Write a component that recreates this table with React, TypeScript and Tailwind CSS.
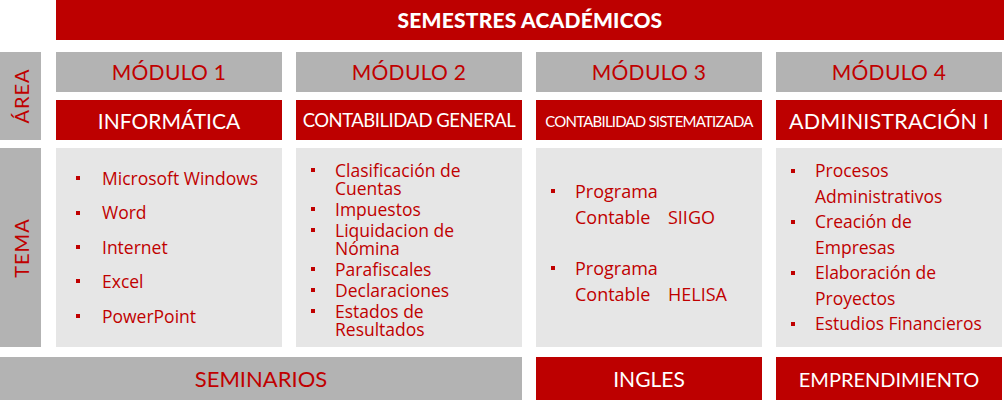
import React from "react";

const head = { fontFamily: "Lato, 'Open Sans', sans-serif" };
const body = { fontFamily: "'Open Sans', 'Noto Sans', sans-serif" };

function Bullet() {
  return <span className="inline-block w-[4px] h-[4px] bg-[#c00000] shrink-0" />;
}

function Lines({ lines }: { lines: string[] }) {
  return (
    <span>
      {lines.map((l, i) => (
        <React.Fragment key={l}>
          {i > 0 && <br />}
          {l}
        </React.Fragment>
      ))}
    </span>
  );
}

export default function App() {
  const cols = "grid grid-cols-[42px_226px_226px_226px_226px] gap-x-[14px]";
  return (
    <div className="w-[1004px] h-[400px] bg-white overflow-hidden">
      <div className="pl-[56px]">
        <div className="h-[40px] bg-[#bd0000] flex items-center justify-center text-white font-black text-[21px] tracking-[0.2px]" style={head}>
          SEMESTRES ACADÉMICOS
        </div>
      </div>
      <div className={`${cols} grid-rows-[40px_40px] gap-y-[8px] mt-[12px]`}>
        <div className="row-span-2 w-[41px] bg-[#b3b3b3] flex items-center justify-center">
          <span className="-rotate-90 text-[#c00000] text-[20px] tracking-[1px] whitespace-nowrap" style={head}>ÁREA</span>
        </div>
        {["MÓDULO 1", "MÓDULO 2", "MÓDULO 3", "MÓDULO 4"].map((m) => (
          <div key={m} className="bg-[#b3b3b3] flex items-center justify-center text-[#c00000] text-[21px] tracking-[0.3px]" style={head}>
            {m}
          </div>
        ))}
        <div className="col-start-2 bg-[#bd0000] flex items-center justify-center text-white text-[21px] pt-[2px]" style={head}>INFORMÁTICA</div>
        <div className="bg-[#bd0000] flex items-center justify-center text-white text-[18.5px] tracking-[-0.5px] pt-[2px]" style={head}>CONTABILIDAD GENERAL</div>
        <div className="bg-[#bd0000] flex items-center justify-center text-white text-[15px] tracking-[-0.8px] pt-[2px]" style={head}>CONTABILIDAD SISTEMATIZADA</div>
        <div className="bg-[#bd0000] flex items-center justify-center text-white text-[21.5px] tracking-[0.2px] pt-[2px]" style={head}>ADMINISTRACIÓN I</div>
      </div>
      <div className={`${cols} mt-[8px] h-[199px]`}>
        <div className="w-[41px] bg-[#b3b3b3] flex items-center justify-center">
          <span className="-rotate-90 text-[#c00000] text-[20px] tracking-[1px] whitespace-nowrap" style={head}>TEMA</span>
        </div>
        <div className="bg-[#e6e6e6] pt-[13px] pl-[20px] text-[#c00000] text-[17.5px]" style={body}>
          {["Microsoft Windows", "Word", "Internet", "Excel", "PowerPoint"].map((t) => (
            <div key={t} className="flex items-center h-[34.4px]">
              <span className="w-[26px] flex"><Bullet /></span>
              <span>{t}</span>
            </div>
          ))}
        </div>
        <div className="bg-[#e6e6e6] pt-[13px] pl-[15px] text-[#c00000] text-[17.5px] leading-[18px] flex flex-col gap-[3px]" style={body}>
          {[["Clasificación de", "Cuentas"], ["Impuestos"], ["Liquidacion de", "Nómina"], ["Parafiscales"], ["Declaraciones"], ["Estados de", "Resultados"]].map((t) => (
            <div key={t[0]} className="flex">
              <span className="w-[24px] h-[18px] flex items-center"><Bullet /></span>
              <Lines lines={t} />
            </div>
          ))}
        </div>
        <div className="bg-[#e6e6e6] pt-[30px] pl-[15px] text-[#c00000] text-[18px] leading-[26px] flex flex-col gap-[25px]" style={body}>
          {["SIIGO", "HELISA"].map((t) => (
            <div key={t} className="flex">
              <span className="w-[24px] h-[26px] flex items-center"><Bullet /></span>
              <span>
                Programa
                <br />
                Contable <span className="inline-block w-[13px]" />{t}
              </span>
            </div>
          ))}
        </div>
        <div className="bg-[#e6e6e6] pt-[10px] pl-[15px] text-[#c00000] text-[17.5px] leading-[25.5px] flex flex-col" style={body}>
          {[["Procesos", "Administrativos"], ["Creación de", "Empresas"], ["Elaboración de", "Proyectos"], ["Estudios Financieros"]].map((t) => (
            <div key={t[0]} className="flex">
              <span className="w-[24px] h-[25.5px] flex items-center"><Bullet /></span>
              <Lines lines={t} />
            </div>
          ))}
        </div>
      </div>
      <div className={`${cols} mt-[10px] h-[43px]`}>
        <div className="col-span-3 bg-[#b3b3b3] flex items-center justify-center text-[#c00000] text-[22px]" style={head}>SEMINARIOS</div>
        <div className="bg-[#bd0000] flex items-center justify-center text-white text-[21px]" style={head}>INGLES</div>
        <div className="bg-[#bd0000] flex items-center justify-center text-white text-[20px]" style={head}>EMPRENDIMIENTO</div>
      </div>
    </div>
  );
}
